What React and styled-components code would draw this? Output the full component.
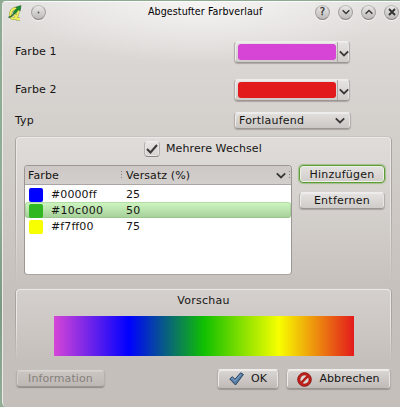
import React from "react";
import styled, { createGlobalStyle } from "styled-components";

const Global = createGlobalStyle`
  * { box-sizing: border-box; }
  body { margin: 0; background: linear-gradient(#8fab92, #8fae96 50%, #7c9983 75%, #92ae97); }
`;

const Desktop = styled.div`
  width: 400px;
  height: 407px;
  padding: 1px 0 0 2px;
  overflow: hidden;
  font: 11px/16px "DejaVu Sans", sans-serif;
  letter-spacing: 0.1px;
  color: #161514;
  white-space: nowrap;
`;

const Window = styled.main`
  height: 406px;
  width: 398px;
  border-top: 1px solid #fbfbfb;
  border-left: 1px solid #eeecea;
  border-radius: 4px 0 0 5px;
  background:
    radial-gradient(ellipse 190px 62px at 50% 0, rgba(255, 255, 255, 0.65), rgba(255, 255, 255, 0)),
    linear-gradient(#e4e2e0 0, #dad6d3 60px, #d3cfcb 130px, #c6c0bc 300px, #c5bfbb);
`;

const TitleBar = styled.header`
  height: 21px;
  display: grid;
  grid-template-columns: 23px 17px 1fr auto;
  align-items: center;
  padding: 0 0 0 5px;
`;

const Title = styled.h1`
  margin: -4px 0 0 100px;
  font: 10.6px/16px "DejaVu Sans Condensed", "DejaVu Sans", sans-serif;
  color: #000;
  letter-spacing: 0.08px;
`;

const TitleButtons = styled.div`
  display: flex;
  gap: 8px;
  padding-right: 1px;
`;

const RoundButton = styled.button`
  width: 15px;
  height: 15px;
  margin-top: -1px;
  padding: 0;
  border: 1px solid #a3a09e;
  border-top-color: #c0bebc;
  border-bottom-color: #858280;
  border-radius: 50%;
  background: linear-gradient(#e9e8e7, #bcbab8);
  box-shadow: 0 1px 1px #f7f6f5;
  display: grid;
  place-items: center;
  font: 10px/12px "DejaVu Sans", sans-serif;
  -webkit-text-stroke: 0.3px #30302f;
  color: #30302f;
`;

const FormRow = styled.div`
  height: ${(p) => p.$h}px;
  margin-top: ${(p) => p.$gap}px;
  padding-left: 12px;
  display: grid;
  grid-template-columns: 219px auto;
  justify-content: start;
  align-items: center;
`;

const Raised = styled.button`
  display: flex;
  align-items: center;
  justify-content: center;
  padding: 0;
  border: 1px solid #b5b0ad;
  border-top-color: #efedec;
  border-bottom-color: #9b9693;
  border-radius: 4px;
  background: linear-gradient(#e5e3e1, #cfcbc8);
  box-shadow: inset 1px 1px 0 #eeecea, inset -1px 0 0 #e8e6e4, 0 1px 1px rgba(70, 60, 55, 0.3);
  font: inherit;
  letter-spacing: inherit;
  color: inherit;
`;

const ColorButton = styled(Raised)`
  width: 116px;
  height: 22px;
  justify-content: flex-start;
  padding-left: 3px;
`;

const ColorFill = styled.span`
  width: 99px;
  height: 16px;
  margin-top: 1px;
  border-radius: 3px;
  background: ${(p) => p.$color};
`;

const MenuPart = styled.span`
  align-self: stretch;
  width: 12px;
  margin-left: 1px;
  padding-top: 3px;
  border-left: 1px solid #aaa6a3;
  display: grid;
  place-items: center;
`;

const Combo = styled(Raised)`
  width: 117px;
  height: 17px;
  justify-content: space-between;
  padding: 0 5px 0 4px;
  letter-spacing: 0.2px;
  background: linear-gradient(#e2e0de, #cac6c3);
`;

const Group = styled.section`
  position: relative;
  width: 375px;
  height: ${(p) => p.$h}px;
  margin: ${(p) => p.$gap}px 0 0 13px;
  background: linear-gradient(rgba(255, 255, 255, ${(p) => p.$glow}), rgba(255, 255, 255, 0));
  border-radius: 4px;

  &::before {
    content: "";
    position: absolute;
    inset: 0;
    border: 1px solid #ebe9e7;
    border-bottom: 0;
    border-radius: 4px;
    box-shadow: -1px 0 0 #aaa4a0, 1px 0 0 #aaa4a0, 0 -1px 0 #c8c3bf;
    clip-path: inset(-2px -2px 0 -2px);
    mask: linear-gradient(#000 45%, transparent) -2px -2px / 379px 100% no-repeat;
    mask-clip: no-clip;
    pointer-events: none;
  }
`;

const CheckLabel = styled.label`
  height: 25px;
  display: flex;
  align-items: center;
  padding: 0 0 2px 128px;
  gap: 6px;
`;

const CheckBox = styled.span`
  width: 16px;
  height: 16px;
  border: 1px solid #b3afac;
  border-top-color: #eeecea;
  border-bottom-color: #8c8784;
  border-radius: 4px;
  background: linear-gradient(#e7e5e3, #d5d2cf);
  box-shadow: inset 0 0 0 1px #e9e7e5;
  display: grid;
  place-items: center;
`;

const GroupBody = styled.div`
  display: flex;
  gap: 7px;
  padding: 3px 0 0 8px;
`;

const Table = styled.div`
  width: 268px;
  height: 110px;
  border: 1px solid #9b9692;
  border-bottom-color: #aaa5a1;
  border-radius: 4px;
  background: #fff;
  overflow: hidden;
`;

const TableHead = styled.div`
  height: 19px;
  display: grid;
  grid-template-columns: 93px 3px 152px 13px 3px;
  align-items: center;
  padding: 1px 0 0 3px;
  background: linear-gradient(#cdc8c5, #d3cfcc);
  border-bottom: 1px solid #aaa5a2;
`;

const Grip = styled.i`
  width: 1px;
  height: 9px;
  background: repeating-linear-gradient(#85817e 0 1px, transparent 1px 3px);
`;

const HeadCell = styled.span`
  padding-left: ${(p) => p.$pad || 0}px;
`;

const TableRow = styled.div`
  height: 16px;
  display: grid;
  grid-template-columns: 22px 75px 1fr;
  align-items: center;
  padding-left: 4px;
  border-radius: 3px;
  background: ${(p) => (p.$selected ? "linear-gradient(#d0f7c2, #a4ce98)" : "#fff")};
  box-shadow: ${(p) => (p.$selected ? "inset 0 0 0 1px rgba(137, 184, 124, 0.4)" : "none")};
  letter-spacing: ${(p) => (p.$selected ? "0.3px" : "inherit")};
`;

const Swatch = styled.span`
  width: 14px;
  height: 14px;
  border-radius: 2px;
  background: ${(p) => p.$color};
`;

const Rows = styled.div`
  padding-top: 1px;

  & span:not(:first-child) {
    padding-top: 1px;
  }
`;

const SideButtons = styled.div`
  display: flex;
  flex-direction: column;
  gap: 9px;
`;

const SideButton = styled(Raised)`
  width: 86px;
  height: 17px;
  margin-bottom: 0;
  line-height: 15px;
  letter-spacing: 0.25px;
  ${(p) =>
    p.$focused &&
    `height: 18px;
     border-color: #5c9b36;
     box-shadow: inset 0 0 0 1px #edf1e7, 0 0 1px 1px rgba(110, 170, 70, .5);`}
`;

const PreviewLabel = styled.div`
  text-align: center;
  padding-top: 4px;
  height: 27px;
  letter-spacing: 0.25px;
`;

const GradientBar = styled.div`
  width: 300px;
  height: 40px;
  margin-left: 38px;
  background: linear-gradient(90deg, #d645d6, #0000ff 25%, #10c000 50%, #f7ff00 75%, #e31a1c);
`;

const Footer = styled.footer`
  display: flex;
  align-items: flex-start;
  margin: 7px 0 0 13px;
`;

const InfoButton = styled(Raised)`
  width: 89px;
  height: 17px;
  margin: 1px 112px 0 0;
  color: #85807c;
  border-top-color: #d9d5d2;
  background: linear-gradient(#cbc6c2, #beb8b4);
  box-shadow: inset 1px 1px 0 #d2cecb, 0 1px 1px rgba(70, 60, 55, 0.4);
  line-height: 14px;
`;

const DialogButton = styled(Raised)`
  width: ${(p) => p.$w}px;
  height: 20px;
  margin-right: 7px;
  gap: 7px;
  background: linear-gradient(#d9d6d4, #c0bab6);
`;

const Chevron = ({ up, size = 10 }) => (
  <svg width={size} height={size === 8 ? 6 : 7} viewBox="0 0 9 6" fill="none" stroke="#3a3836" strokeWidth="1.6">
    <path d={up ? "M.7 5 4.5 1.2 8.3 5" : "M.7 1 4.5 4.8 8.3 1"} />
  </svg>
);

const AppIcon = () => (
  <svg width="14" height="16" viewBox="0 0 14 16">
    <path d="M7.5 3.5C4.5 3.5 3 6 2.5 9s1 4.5 3 4.5S9.5 11 10 8 9.5 3.5 7.5 3.5ZM6.5 9.5 9 14h3" fill="none" stroke="#8b9640" strokeWidth="2.8" />
    <path d="M7.5 3.5C4.5 3.5 3 6 2.5 9s1 4.5 3 4.5S9.5 11 10 8 9.5 3.5 7.5 3.5ZM6.5 9.5 9 14h3" fill="none" stroke="#eeee58" strokeWidth="1.9" />
    <path d="M.5 12.5 3 11.5 8 6.5" fill="none" stroke="#38723c" strokeWidth="1.6" />
    <path d="m7.5 2.2 5.5-1.7-.7 5.3-1.6-1-4 4.2-1.6-1.7 4-4.2Z" fill="#168b2b" stroke="#126322" strokeWidth=".5" />
  </svg>
);

const OkIcon = () => (
  <svg width="15" height="14" viewBox="0 0 15 14">
    <path d="m.8 7 2.4-2.3L6 7.3l5.6-6.5 2.8 1.7L6.5 13Z" fill="#587fa8" stroke="#27405c" strokeLinejoin="round" />
    <path d="m2.3 7 1-.8L6 8.8l6-6.6" fill="none" stroke="#91b0cd" strokeWidth=".7" />
  </svg>
);

const CancelIcon = () => (
  <svg width="15" height="15" viewBox="0 0 15 15">
    <circle cx="7.5" cy="7.5" r="6.8" fill="#c51e1a" stroke="#8c1715" />
    <circle cx="7.5" cy="7.5" r="4.4" fill="#ddd8d5" stroke="#8e1c19" strokeWidth=".5" />
    <path d="m4.2 10.8 6.6-6.6" stroke="#b51c18" strokeWidth="2.4" />
  </svg>
);

const rows = [
  { color: "#0000ff", swatch: "#0000ff", stop: 25 },
  { color: "#10c000", swatch: "#30b820", stop: 50, selected: true },
  { color: "#f7ff00", swatch: "#f7ff00", stop: 75 },
];

const ColorPicker = ({ color }) => (
  <ColorButton>
    <ColorFill $color={color} />
    <MenuPart><Chevron /></MenuPart>
  </ColorButton>
);

export default function App() {
  return (
    <Desktop>
      <Global />
      <Window>
        <TitleBar>
          <AppIcon />
          <RoundButton>
            <svg width="3" height="3"><circle cx="1.5" cy="1.5" r=".9" fill="#555" /></svg>
          </RoundButton>
          <Title>Abgestufter Farbverlauf</Title>
          <TitleButtons>
            <RoundButton>?</RoundButton>
            <RoundButton><Chevron size={8} /></RoundButton>
            <RoundButton><Chevron size={8} up /></RoundButton>
            <RoundButton>
              <svg width="8" height="8" stroke="#30302f" strokeWidth="1.8"><path d="m1 1 6 6M7 1 1 7" /></svg>
            </RoundButton>
          </TitleButtons>
        </TitleBar>
        <FormRow $h={23} $gap={17}>
          <span>Farbe 1</span>
          <ColorPicker color="#d645d6" />
        </FormRow>
        <FormRow $h={23} $gap={15}>
          <span>Farbe 2</span>
          <ColorPicker color="#e31a1c" />
        </FormRow>
        <FormRow $h={17} $gap={11}>
          <span>Typ</span>
          <Combo>Fortlaufend<Chevron /></Combo>
        </FormRow>
        <Group $h={148} $gap={8} $glow={0.28}>
          <CheckLabel>
            <CheckBox>
              <svg width="12" height="10" fill="none" stroke="#3b3937" strokeWidth="2"><path d="m1 5 3.5 3.5L11 1" /></svg>
            </CheckBox>
            Mehrere Wechsel
          </CheckLabel>
          <GroupBody>
            <Table>
              <TableHead>
                <HeadCell>Farbe</HeadCell>
                <Grip />
                <HeadCell $pad={2}>Versatz (%)</HeadCell>
                <Chevron />
                <Grip />
              </TableHead>
              <Rows>
                {rows.map((r) => (
                  <TableRow key={r.color} $selected={r.selected}>
                    <Swatch $color={r.swatch} />
                    <span>{r.color}</span>
                    <span>{r.stop}</span>
                  </TableRow>
                ))}
              </Rows>
            </Table>
            <SideButtons>
              <SideButton $focused>Hinzufügen</SideButton>
              <SideButton>Entfernen</SideButton>
            </SideButtons>
          </GroupBody>
        </Group>
        <Group $h={73} $gap={4} $glow={0.25}>
          <PreviewLabel>Vorschau</PreviewLabel>
          <GradientBar />
        </Group>
        <Footer>
          <InfoButton disabled>Information</InfoButton>
          <DialogButton $w={62}><OkIcon />OK</DialogButton>
          <DialogButton $w={105}><CancelIcon />Abbrechen</DialogButton>
        </Footer>
      </Window>
    </Desktop>
  );
}
